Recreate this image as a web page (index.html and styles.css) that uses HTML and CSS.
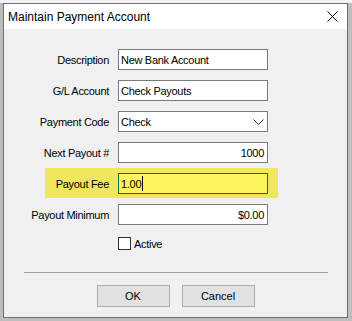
FILE: index.html
```html
<!DOCTYPE html>
<html lang="en">
<head>
    <meta charset="UTF-8">
    <title>Maintain Payment Account</title>
    <link rel="stylesheet" href="styles.css">
</head>
<body>

    <div class="window">
        <div class="titlebar">
            <span class="title">Maintain Payment Account</span>
            <svg class="close" width="11" height="11" viewBox="0 0 11 11">
                <path d="M0.5 0.5L10.5 10.5M10.5 0.5L0.5 10.5" stroke="#000" stroke-width="1" fill="none"/>
            </svg>
        </div>

        <div class="client">
            <div class="fields">
                <div class="row">
                    <span class="label">Description</span>
                    <div class="field">New Bank Account</div>
                </div>
                <div class="row">
                    <span class="label">G/L Account</span>
                    <div class="field">Check Payouts</div>
                </div>
                <div class="row">
                    <span class="label">Payment Code</span>
                    <div class="field combo">
                        <span>Check</span>
                        <svg width="11" height="6" viewBox="0 0 11 6">
                            <polyline points="0.5,0.5 5.5,5.5 10.5,0.5" stroke="#333" stroke-width="1" fill="none"/>
                        </svg>
                    </div>
                </div>
                <div class="row">
                    <span class="label">Next Payout #</span>
                    <div class="field num">1000</div>
                </div>
                <div class="row highlight">
                    <span class="label">Payout Fee</span>
                    <div class="field">1.00<span class="caret"></span></div>
                </div>
                <div class="row">
                    <span class="label">Payout Minimum</span>
                    <div class="field num">$0.00</div>
                </div>
            </div>

            <div class="check">
                <span class="box"></span>
                <span>Active</span>
            </div>

            <div class="separator"></div>

            <div class="buttons">
                <button>OK</button>
                <button>Cancel</button>
            </div>
        </div>
    </div>

</body>
</html>
```

FILE: styles.css
```css
body {
    margin: 0;
    font-family: "Liberation Sans", Arial, sans-serif;
    font-size: 11px;
    letter-spacing: -0.3px;
    color: #000;
    background: linear-gradient(#f3f3f3 0 3px, #bdbdbd 3px);
    height: 321px;
    overflow: hidden;
}

.window {
    margin: 3px 0 0 3px;
    width: 345px;
    height: 315px;
    box-sizing: border-box;
    border: 1px solid #6e6e6e;
    background-color: #f0f0f0;
    display: flex;
    flex-direction: column;
}

.titlebar {
    height: 25px;
    background-color: #fff;
    display: flex;
    align-items: center;
    justify-content: space-between;
    padding: 0 9px 0 4px;
}

.title {
    font-size: 12px;
    letter-spacing: 0;
}

.client {
    padding-top: 20px;
    display: flex;
    flex-direction: column;
}

.fields {
    display: flex;
    flex-direction: column;
    gap: 10px;
}

.row {
    display: grid;
    grid-template-columns: 105px 150px;
    column-gap: 9px;
    align-items: center;
    width: fit-content;
    padding-right: 10px;
}

.label {
    text-align: right;
    white-space: nowrap;
}

.field {
    height: 21px;
    box-sizing: border-box;
    border: 1px solid #7a7a7a;
    background-color: #fff;
    padding: 0 3px 0 2px;
    display: flex;
    align-items: center;
    white-space: nowrap;
}

.num {
    justify-content: flex-end;
}

.combo {
    justify-content: space-between;
}

/* highlighted row */
.highlight {
    margin: -5px 0 -4px;
    padding: 5px 10px 4px 0;
    background: linear-gradient(to right, transparent 41px, #efe65b 41px);
}

.highlight .field {
    border-color: #1d6b3a;
    background-color: #fdf35d;
}

.caret {
    display: inline-block;
    width: 0;
    height: 15px;
    border-left: 1px solid #000;
    margin-left: 1px;
}

.check {
    margin: 12px 0 0 114px;
    height: 13px;
    display: flex;
    align-items: center;
    gap: 3px;
}

.box {
    width: 13px;
    height: 13px;
    box-sizing: border-box;
    border: 1px solid #333;
    background-color: #fff;
}

.separator {
    margin: 22px 19px 0 20px;
    border-top: 1px solid #a0a0a0;
}

.buttons {
    display: flex;
    justify-content: center;
    gap: 12px;
    margin-top: 12px;
}

button {
    width: 73px;
    height: 22px;
    padding: 0;
    background-color: #e1e1e1;
    border: 1px solid #adadad;
    font: inherit;
    color: #000;
}
```
